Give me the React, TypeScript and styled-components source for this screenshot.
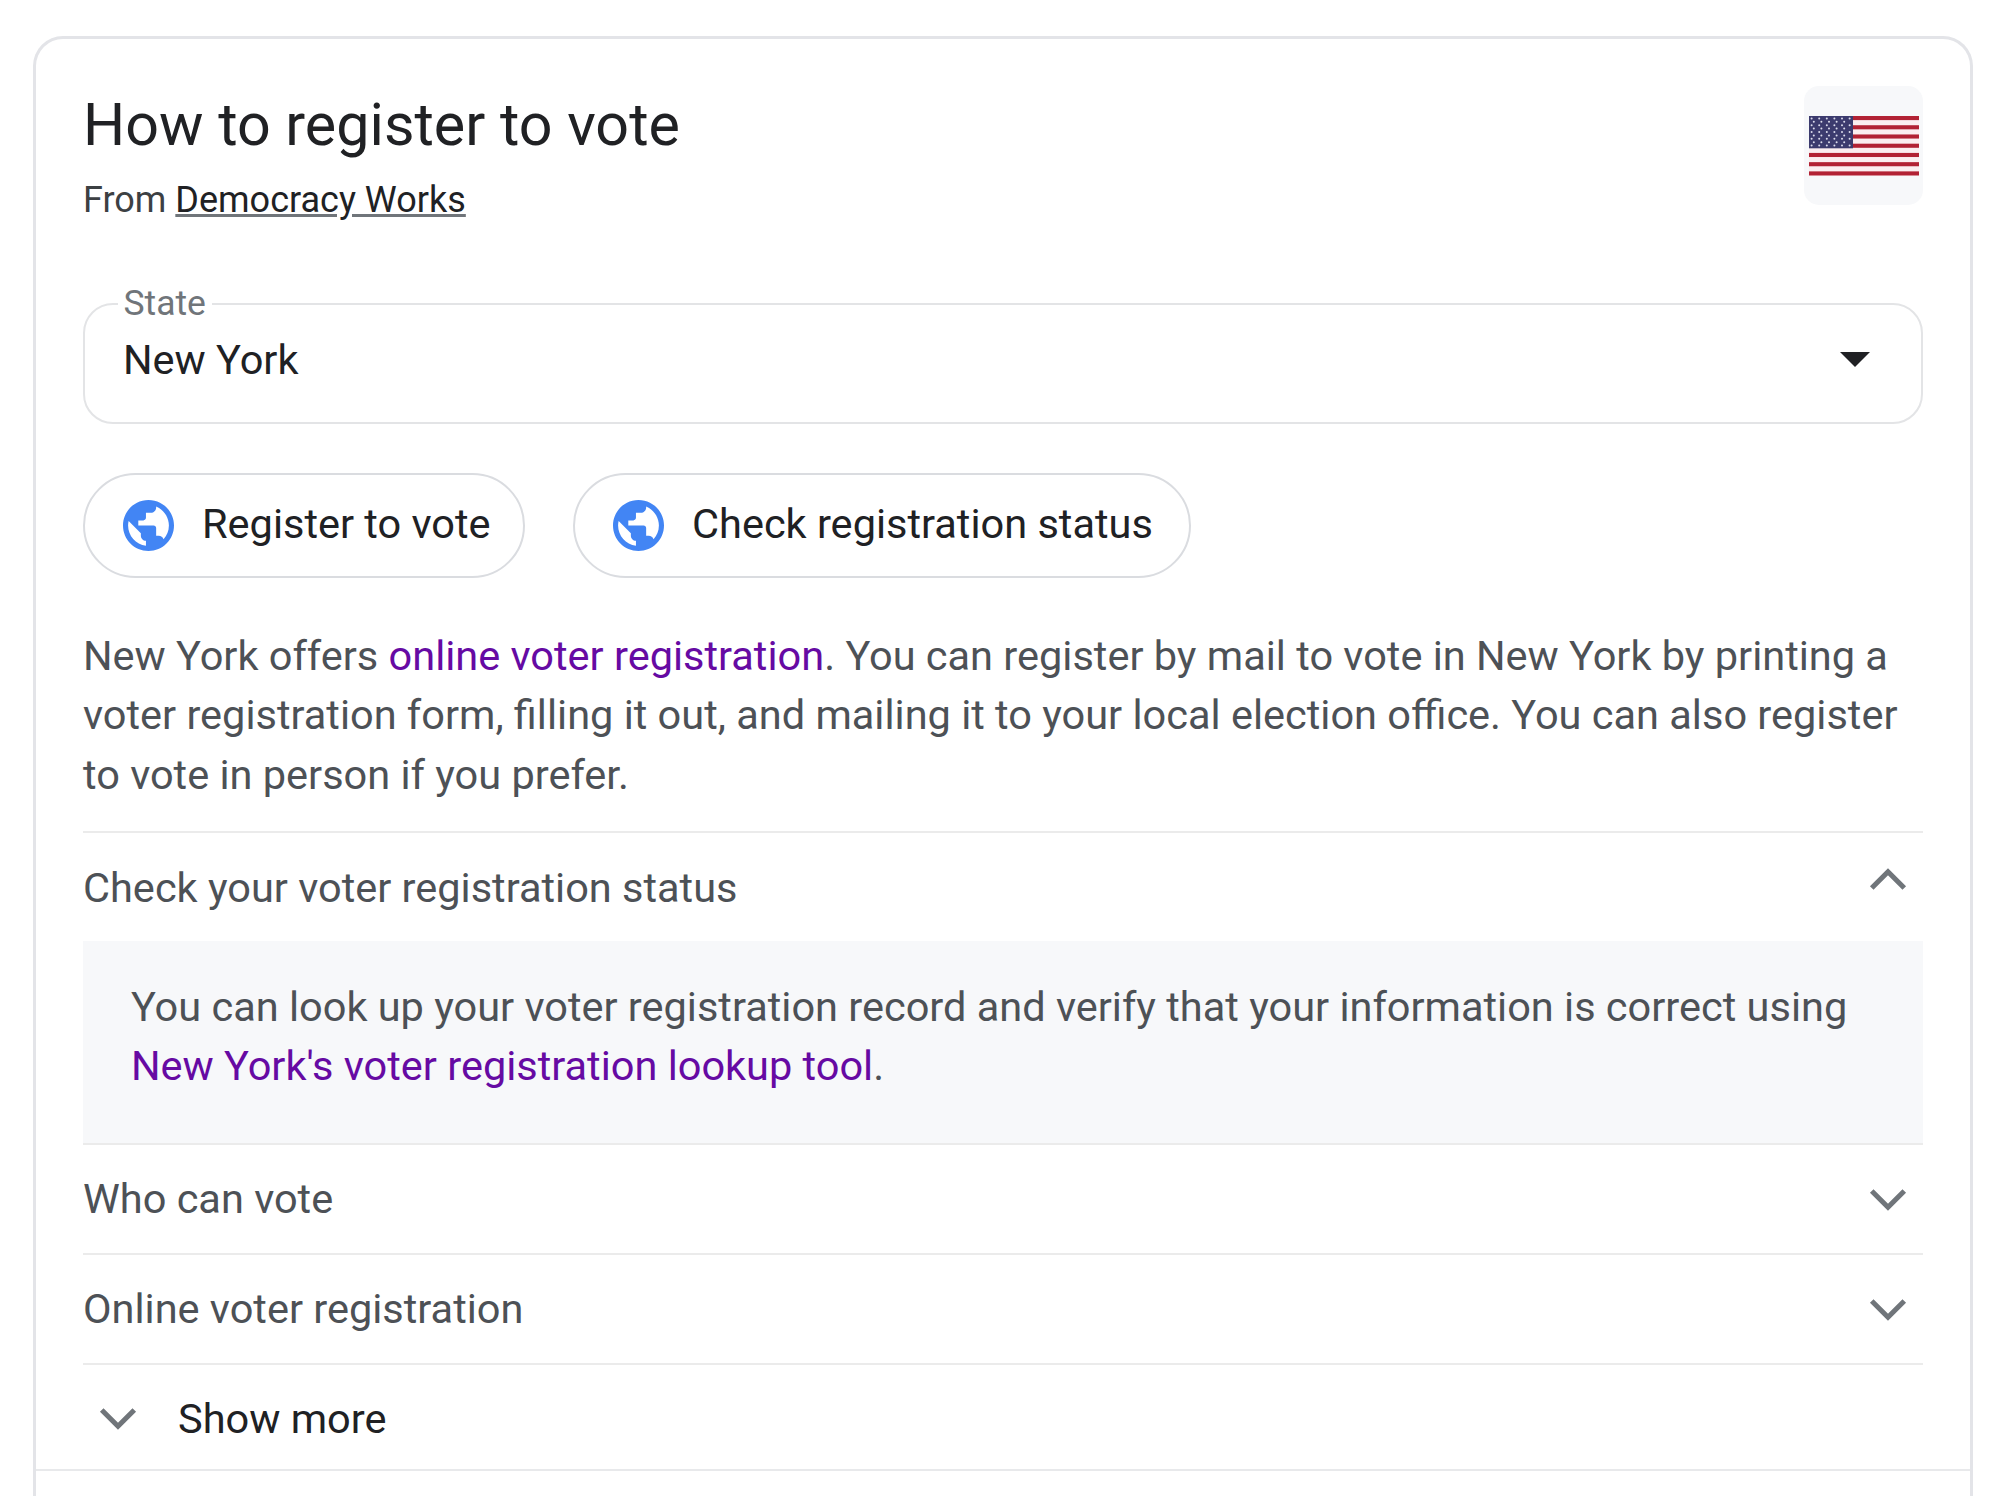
import React from "react";
import styled, { createGlobalStyle } from "styled-components";

const Global = createGlobalStyle`
  html, body {
    margin: 0;
    padding: 0;
    background: #fff;
    height: 1496px;
    overflow: hidden;
  }
  * { box-sizing: border-box; }
`;

const Page = styled.div`
  padding: 36px 26px 0 33px;
  height: 1496px;
  overflow: hidden;
  font-family: Roboto, "Liberation Sans", sans-serif;
`;

const Card = styled.section`
  height: 1460px;
  border: 3px solid #e3e4e8;
  border-bottom: none;
  border-radius: 30px 30px 0 0;
  display: flex;
  flex-direction: column;
`;

const Body = styled.div`
  padding: 51px 47px 0 47px;
`;

const Header = styled.header`
  display: flex;
  justify-content: space-between;
  align-items: flex-start;
  height: 213px;
`;

const Title = styled.h1`
  margin: 0;
  font-size: 59.2px;
  line-height: 70px;
  font-weight: 400;
  color: #202124;
`;

const Source = styled.p`
  margin: 15px 0 0;
  font-size: 36px;
  line-height: 50px;
  color: #3c4043;
`;

const SourceLink = styled.a`
  color: #202124;
  text-decoration: underline;
  text-decoration-color: #70757a;
`;

const FlagBadge = styled.div`
  width: 119px;
  height: 119px;
  margin-top: -4px;
  border-radius: 15px;
  background: #f7f8fa;
  display: flex;
  align-items: center;
  justify-content: center;
`;

const FlagSvg = styled.svg`
  width: 110px;
  height: 60px;
  filter: blur(0.4px);
`;

const SelectBox = styled.div`
  position: relative;
  height: 121px;
  border: 2.5px solid #e3e4e6;
  border-radius: 30px;
  padding: 0 51.5px 8px 38px;
  display: flex;
  align-items: center;
  justify-content: space-between;
  font-size: 41.5px;
  color: #202124;
`;

const SelectLabel = styled.span`
  position: absolute;
  left: 32.5px;
  top: -22px;
  padding: 0 6px;
  background: #fff;
  font-size: 35.5px;
  line-height: 40px;
  color: #70757a;
`;

const Caret = styled.span`
  width: 0;
  height: 0;
  border-left: 15px solid transparent;
  border-right: 15px solid transparent;
  border-top: 15px solid #202124;
`;

const ActionRow = styled.div`
  display: flex;
  gap: 48.5px;
  margin-top: 49px;
`;

const Action = styled.a<{ $wide?: boolean }>`
  height: 105px;
  padding: 0 ${(props) => (props.$wide ? "36px" : "32px")} 5px 38px;
  border: 2.5px solid #dadce0;
  border-radius: 53px;
  display: flex;
  align-items: center;
  gap: 28px;
  font-size: 41.5px;
  color: #202124;
  svg { margin-top: 5px; }
`;

const ActionLabel = styled.span`
  white-space: nowrap;
`;

const Summary = styled.p`
  margin: 47.5px 0 27px;
  font-size: 41.5px;
  line-height: 59.5px;
  color: #4d5156;
`;

const VisitedLink = styled.a`
  color: #660aa3;
`;

const Row = styled.div`
  height: 110px;
  border-top: 2.5px solid #ebebeb;
  display: flex;
  align-items: center;
  justify-content: space-between;
  padding-right: 3px;
  font-size: 41.5px;
  color: #4d5156;
  svg { margin-top: 2px; }
`;

const Panel = styled.div`
  background: #f7f8fa;
  height: 201.5px;
  padding: 35.5px 48px 0;
  font-size: 41.5px;
  line-height: 59.5px;
  color: #4d5156;
`;

const MoreRow = styled.div`
  height: 106.5px;
  border-top: 2.5px solid #ebebeb;
  display: flex;
  align-items: center;
  gap: 28px;
  padding: 4px 0 0 3px;
  font-size: 41.5px;
  color: #202124;
`;

const CardEnd = styled.div`
  border-top: 2.5px solid #e8e9eb;
`;

const ChevronSvg = styled.svg<{ $up?: boolean }>`
  width: 64px;
  height: 64px;
  flex: none;
  fill: none;
  stroke: #70757a;
  stroke-width: 1.9;
  transform: ${(props) => (props.$up ? "translateY(-9px) rotate(180deg)" : "none")};
`;

function Chevron({ up }: { up?: boolean }) {
  return (
    <ChevronSvg $up={up} viewBox="0 0 24 24">
      <path d="M5.9 8.6 12 14.7l6.1-6.1" />
    </ChevronSvg>
  );
}

function GlobeIcon() {
  return (
    <svg width="51" height="51" viewBox="2 2 20 20" fill="#4285f4" fillRule="evenodd">
      <path d="M12 2C6.48 2 2 6.48 2 12s4.48 10 10 10 10-4.48 10-10S17.52 2 12 2zm-1 17.93c-3.95-.49-7-3.85-7-7.93 0-.62.08-1.21.21-1.79L9 15v1c0 1.1.9 2 2 2v1.93zm6.9-2.54c-.26-.81-1-1.39-1.9-1.39h-1v-3c0-.55-.45-1-1-1H8v-2h2c.55 0 1-.45 1-1V7h2c1.1 0 2-.9 2-2v-.41c2.93 1.19 5 4.06 5 7.41 0 2.08-.8 3.97-2.1 5.39z" />
    </svg>
  );
}

function UsFlag() {
  const stripes = Array.from({ length: 7 }, (_, i) => i * 2);
  const stars: [number, number][] = [];
  for (let r = 0; r < 9; r++) {
    const n = r % 2 === 0 ? 6 : 5;
    for (let c = 0; c < n; c++) {
      stars.push([(r % 2 === 0 ? 2.6 : 4.8) + c * 7.6, 2.4 + r * 3.4]);
    }
  }
  return (
    <FlagSvg viewBox="0 0 110 60">
      <rect width="110" height="60" fill="#fbeef0" />
      {stripes.map((s) => (
        <rect key={s} y={s * 4.615} width="110" height="4.1" fill="#b22234" />
      ))}
      <rect width="44" height="32.3" fill="#3c3b6e" />
      {stars.map(([x, y]) => (
        <circle key={`${x}-${y}`} cx={x} cy={y} r="1" fill="#dcdcec" />
      ))}
    </FlagSvg>
  );
}

export default function App() {
  return (
    <>
      <Global />
      <Page>
        <Card>
          <Body>
            <Header>
              <div>
                <Title>How to register to vote</Title>
                <Source>
                  From <SourceLink>Democracy Works</SourceLink>
                </Source>
              </div>
              <FlagBadge>
                <UsFlag />
              </FlagBadge>
            </Header>
            <SelectBox>
              <SelectLabel>State</SelectLabel>
              New York
              <Caret />
            </SelectBox>
            <ActionRow>
              <Action>
                <GlobeIcon />
                <ActionLabel>Register to vote</ActionLabel>
              </Action>
              <Action $wide>
                <GlobeIcon />
                <ActionLabel>Check registration status</ActionLabel>
              </Action>
            </ActionRow>
            <Summary>
              New York offers <VisitedLink>online voter registration</VisitedLink>. You can register by mail to vote in New York by printing a voter registration form, filling it out, and mailing it to your local election office. You can also register to vote in person if you prefer.
            </Summary>
            <Row>
              Check your voter registration status
              <Chevron up />
            </Row>
            <Panel>
              You can look up your voter registration record and verify that your information is correct using <VisitedLink>New York's voter registration lookup tool</VisitedLink>.
            </Panel>
            <Row>
              Who can vote
              <Chevron />
            </Row>
            <Row>
              Online voter registration
              <Chevron />
            </Row>
            <MoreRow>
              <Chevron />
              Show more
            </MoreRow>
          </Body>
          <CardEnd />
        </Card>
      </Page>
    </>
  );
}
